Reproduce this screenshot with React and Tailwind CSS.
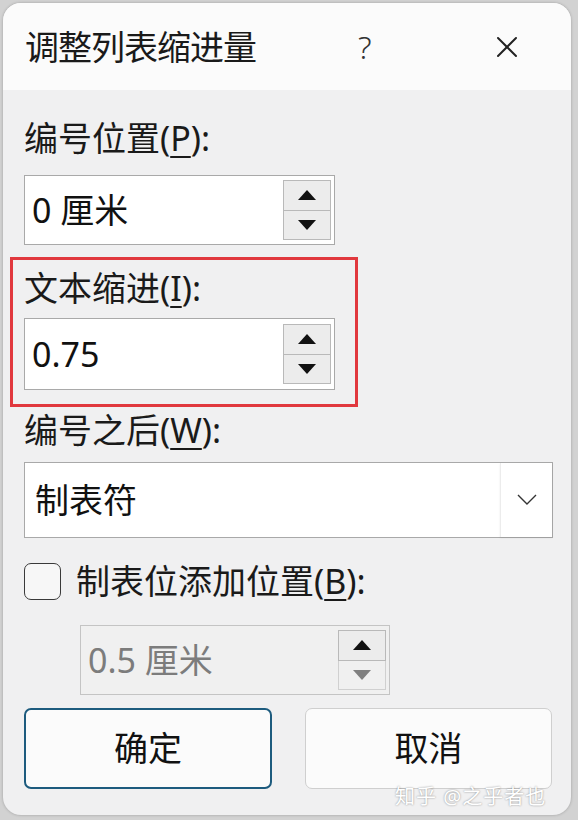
import { X } from "lucide-react";

const FONT = { fontFamily: '"Noto Sans", "Noto Sans CJK SC", sans-serif' };

const Spinner = ({ disabled }) => (
  <div className="flex flex-col w-[48px] h-[60px] mr-[3px]">
    <div className="flex-1 flex items-center justify-center bg-[#ececec] border border-[#b9b9b9]">
      <svg width="18" height="10" viewBox="0 0 18 10">
        <path d="M9 0 L18 10 L0 10 Z" fill="#111" />
      </svg>
    </div>
    <div
      className={`flex-1 flex items-center justify-center border border-t-0 ${
        disabled ? "bg-[#f0f0f0] border-[#d0d0d0]" : "bg-[#ececec] border-[#b9b9b9]"
      }`}
    >
      <svg width="18" height="10" viewBox="0 0 18 10">
        <path d="M0 0 L18 0 L9 10 Z" fill={disabled ? "#808080" : "#111"} />
      </svg>
    </div>
  </div>
);

const SpinInput = ({ value, disabled, className = "" }) => (
  <div
    className={`flex items-center border ${
      disabled ? "bg-[#f0f0f0] border-[#c4c4c4]" : "bg-white border-[#a9a9a9]"
    } ${className}`}
  >
    <span
      className={`flex-1 pl-[7px] text-[34px] leading-none ${
        disabled ? "text-[#7c7c7c]" : "text-[#111]"
      }`}
    >
      {value}
    </span>
    <Spinner disabled={disabled} />
  </div>
);

const Label = ({ text, mnemonic, className = "" }) => (
  <div className={`h-[40px] leading-[40px] text-[34px] text-[#1a1a1a] ${className}`}>
    {text}(<span className="underline underline-offset-[5px] decoration-[2px]">{mnemonic}</span>):
  </div>
);

export default function App() {
  return (
    <div className="w-[578px] h-[820px] bg-[#d2d2d2] pt-[3px] pl-[3px] relative" style={FONT}>
      <div className="w-[568px] h-[812px] rounded-[18px] overflow-hidden bg-[#f0f0f1] flex flex-col shadow-[0_0_3px_rgba(0,0,0,0.25)]">
        {/* title bar */}
        <div className="h-[87px] bg-[#fbfbfb] flex items-center pl-[22px] pr-[46px] shrink-0">
          <span className="text-[34px] text-[#1a1a1a] leading-none tracking-[-1px]">调整列表缩进量</span>
          <span className="ml-[102px] text-[32px] font-light text-[#333] leading-none">?</span>
          <X className="ml-auto w-[36px] h-[36px] text-[#222]" strokeWidth={1.3} />
        </div>

        {/* body */}
        <div className="pl-[21px] flex flex-col">
          <Label text="编号位置" mnemonic="P" className="mt-[28px]" />
          <SpinInput value="0 厘米" className="mt-[17px] h-[70px] w-[311px]" />

          <div className="mt-[12px] -ml-[14px] w-[348px] border-[3px] border-[#e1383e] pl-[11px] pt-[8px] pb-[14px]">
            <Label text="文本缩进" mnemonic="I" />
            <SpinInput value="0.75" className="mt-[10px] h-[72px] w-[311px]" />
          </div>

          <Label text="编号之后" mnemonic="W" className="mt-[3px]" />
          <div className="mt-[12px] h-[76px] w-[529px] bg-white border border-[#a9a9a9] flex items-center">
            <span className="flex-1 pl-[10px] text-[34px] text-[#111] leading-none">制表符</span>
            <div className="w-[52px] h-full flex items-center justify-center border-l border-[#ececec] shadow-[0_1px_2px_rgba(0,0,0,0.08)]">
              <svg width="20" height="12" viewBox="0 0 20 12">
                <path d="M1 1 L10 10 L19 1" fill="none" stroke="#333" strokeWidth="1.4" />
              </svg>
            </div>
          </div>

          <div className="mt-[24px] h-[38px] flex items-center">
            <div className="w-[37px] h-[37px] rounded-[7px] border-[1.5px] border-[#3a3a3a] bg-[#f7f7f7]" />
            <span className="ml-[15px] text-[34px] text-[#1a1a1a] leading-none">
              制表位添加位置(<span className="underline underline-offset-[5px] decoration-[2px]">B</span>):
            </span>
          </div>

          <SpinInput value="0.5 厘米" disabled className="mt-[25px] ml-[56px] h-[70px] w-[310px]" />

          <div className="mt-[13px] flex gap-[33px]">
            <button className="w-[248px] h-[81px] rounded-[7px] bg-[#fbfbfb] border-2 border-[#1d5b7e] text-[34px] text-[#111]">
              确定
            </button>
            <button className="w-[247px] h-[81px] rounded-[7px] bg-[#fbfbfb] border border-[#cfcfcf] text-[34px] text-[#111]">
              取消
            </button>
          </div>
        </div>
      </div>

      {/* watermark */}
      <div className="absolute left-[395px] top-[782px] text-[20px] text-white tracking-[1px] [text-shadow:0_0_2px_rgba(0,0,0,0.45)]">
        知乎 @之乎者也
      </div>
    </div>
  );
}
